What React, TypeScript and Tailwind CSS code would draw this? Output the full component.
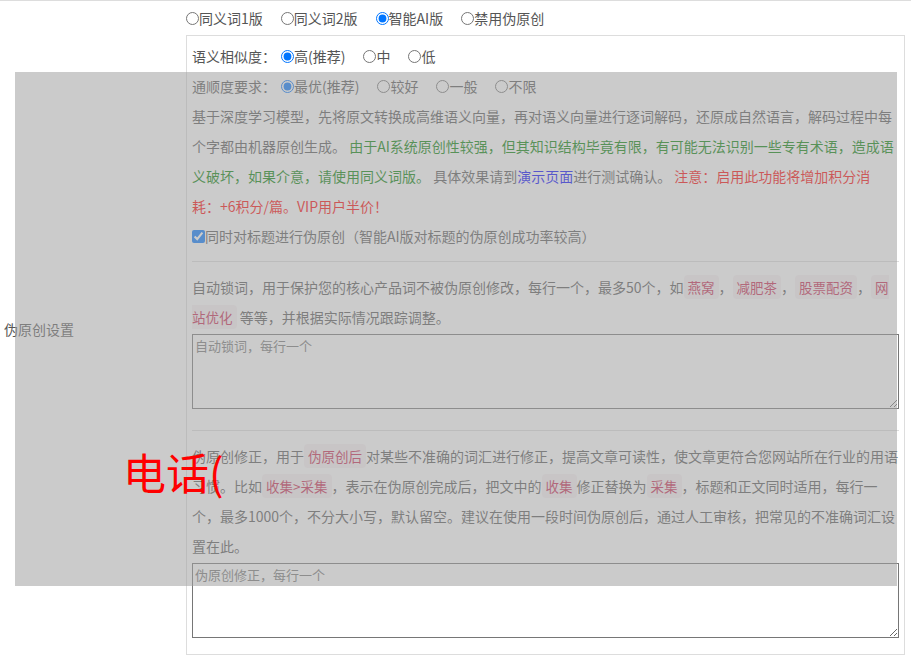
import React from 'react';

function Radio({ name, label, checked, first }: { name: string; label: string; checked?: boolean; first?: boolean }) {
    return (
        <label className={`inline-flex items-center mr-[18px] ${first ? 'ml-[5px]' : ''}`}>
            <input type="radio" name={name} defaultChecked={checked} className="m-0 w-[13px] h-[13px]" />
            {label}
        </label>
    );
}

function Tag({ children }: { children: React.ReactNode }) {
    return (
        <code className="bg-[#f9f2f4] text-[#c7254e] text-[13.5px] px-[4px] py-[2px] rounded-[4px] font-['Noto_Sans_CJK_SC',sans-serif]">
            {children}
        </code>
    );
}

export default function App() {
    return (
        <div className="relative w-[911px] h-[658px] overflow-hidden bg-white text-[14px] text-[#555] font-['Noto_Sans_CJK_SC','Microsoft_YaHei',sans-serif]">
            <div className="flex border-t border-[#ddd] min-h-[658px]">
                <div className="w-[186px] shrink-0 flex items-center pl-[4px]">伪原创设置</div>
                <div className="flex-1 pr-[6px] pb-[3px]">
                    <div className="h-[34px] flex items-center">
                        <Radio name="mode" label="同义词1版" />
                        <Radio name="mode" label="同义词2版" />
                        <Radio name="mode" label="智能AI版" checked />
                        <Radio name="mode" label="禁用伪原创" />
                    </div>
                    <div className="border border-[#ddd] px-[5px] pt-[5px] pb-[16px] leading-[30px]">
                        <div className="flex items-center h-[30px]">
                            语义相似度：
                            <Radio name="sim" label="高(推荐)" checked first />
                            <Radio name="sim" label="中" />
                            <Radio name="sim" label="低" />
                        </div>
                        <div className="flex items-center h-[30px]">
                            通顺度要求：
                            <Radio name="flu" label="最优(推荐)" checked first />
                            <Radio name="flu" label="较好" />
                            <Radio name="flu" label="一般" />
                            <Radio name="flu" label="不限" />
                        </div>
                        <p className="whitespace-nowrap">
                            基于深度学习模型，先将原文转换成高维语义向量，再对语义向量进行逐词解码，还原成自然语言，解码过程中每
                            <br />
                            个字都由机器原创生成。{' '}
                            <span className="text-[#008000]">
                                由于AI系统原创性较强，但其知识结构毕竟有限，有可能无法识别一些专有术语，造成语
                                <br />
                                义破坏，如果介意，请使用同义词版。
                            </span>{' '}
                            具体效果请到<a className="text-[#0000ff]">演示页面</a>进行测试确认。{' '}
                            <span className="text-[#ff0000]">
                                注意：启用此功能将增加积分消
                                <br />
                                耗：+6积分/篇。VIP用户半价！
                            </span>
                        </p>
                        <label className="flex items-center h-[30px]">
                            <input type="checkbox" defaultChecked className="m-0 w-[13px] h-[13px]" />
                            同时对标题进行伪原创（智能AI版对标题的伪原创成功率较高）
                        </label>
                        <div className="mt-[10px] mb-[10px] border-t border-[#ddd]" />
                        <p className="whitespace-nowrap">
                            自动锁词，用于保护您的核心产品词不被伪原创修改，每行一个，最多50个，如<Tag>燕窝</Tag>，<Tag>减肥茶</Tag>，<Tag>股票配资</Tag>，<Tag>网<br />站优化</Tag> 等等，并根据实际情况跟踪调整。
                        </p>
                        <textarea
                            placeholder="自动锁词，每行一个"
                            className="block w-full h-[75px] mt-[2px] border border-[#767676] p-[2px] text-[13px] leading-[18px] bg-white placeholder:text-[#757575]"
                        />
                        <div className="mt-[21px] mb-[10px] border-t border-[#ddd]" />
                        <p className="whitespace-nowrap">
                            伪原创修正，用于<Tag>伪原创后</Tag>对某些不准确的词汇进行修正，提高文章可读性，使文章更符合您网站所在行业的用语
                            <br />
                            习惯。比如<Tag>收集&gt;采集</Tag>，表示在伪原创完成后，把文中的<Tag>收集</Tag>修正替换为<Tag>采集</Tag>，标题和正文同时适用，每行一
                            <br />
                            个，最多1000个，不分大小写，默认留空。建议在使用一段时间伪原创后，通过人工审核，把常见的不准确词汇设
                            <br />
                            置在此。
                        </p>
                        <textarea
                            placeholder="伪原创修正，每行一个"
                            className="block w-full h-[75px] mt-[2px] border border-[#767676] p-[2px] text-[13px] leading-[18px] bg-white placeholder:text-[#757575]"
                        />
                    </div>
                </div>
            </div>

            {/* grey mask lying over the form */}
            <div className="absolute left-[15px] top-[72px] w-[882px] h-[514px] bg-[rgba(160,160,160,0.55)]">
                <span className="absolute left-[108px] top-[378px] text-[43px] leading-none text-[#ff0000]">电话(</span>
            </div>
        </div>
    );
}
